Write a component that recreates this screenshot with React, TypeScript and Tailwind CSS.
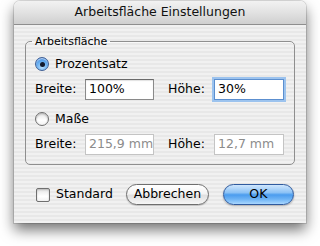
import React from "react";

const font = { fontFamily: '"DejaVu Sans", "Liberation Sans", sans-serif' };

function Radio({ checked }: { checked: boolean }) {
  return checked ? (
    <span className="flex h-[14px] w-[14px] shrink-0 items-center justify-center rounded-full border border-[#3f5f95] bg-[radial-gradient(circle_at_50%_75%,#b9e0ff_0%,#5ea8ee_55%,#2f6fcf_100%)] shadow-[inset_0_1px_1px_rgba(255,255,255,0.7)]">
      <span className="h-[5px] w-[5px] rounded-full bg-[#111a2e]" />
    </span>
  ) : (
    <span className="h-[14px] w-[14px] shrink-0 rounded-full border border-[#6f6f6f] bg-[linear-gradient(180deg,#e6e6e6_0%,#ffffff_60%,#f4f4f4_100%)] shadow-[inset_0_1px_2px_rgba(0,0,0,0.25)]" />
  );
}

function Field({
  value,
  width,
  focused,
  disabled,
}: {
  value: string;
  width: string;
  focused?: boolean;
  disabled?: boolean;
}) {
  return (
    <div
      className={
        "flex h-[21px] items-center overflow-hidden whitespace-nowrap bg-white pl-[3px] text-[12.5px] leading-none " +
        width +
        (focused
          ? " border border-[#5c8fcf] shadow-[0_0_0_2px_#9cc3ee]"
          : disabled
          ? " border border-[#c4c4c4] text-[#8c8c8c]"
          : " border border-[#8a8a8a] border-t-[#6a6a6a] shadow-[inset_0_1px_1px_rgba(0,0,0,0.12)] text-black")
      }
    >
      {value}
    </div>
  );
}

export default function App() {
  return (
    <div
      className="flex h-[246px] w-[320px] items-start bg-white pl-[14px] pt-[1px]"
      style={font}
    >
      <div className="flex h-[222px] w-[292px] flex-col overflow-hidden rounded-t-[6px] shadow-[0_7px_14px_rgba(0,0,0,0.55),0_0_0_1px_rgba(0,0,0,0.12)]">
        <div className="flex h-[24px] shrink-0 items-center justify-center border-b border-[#8e8e8e] bg-[linear-gradient(180deg,#f2f2f2_0%,#e2e2e2_50%,#cfcfcf_100%)] text-[12.5px] text-[#111]">
          Arbeitsfläche Einstellungen
        </div>
        <div className="flex flex-1 flex-col bg-[repeating-linear-gradient(180deg,#f1f1f1_0px,#f1f1f1_2px,#e8e8e8_2px,#e8e8e8_4px)] text-[12.5px] text-black">
          <fieldset className="mx-[11px] mt-[10px] h-[130px] rounded-[5px] border border-[#8f8f8f] shadow-[inset_0_1px_0_rgba(255,255,255,0.6)]">
            <legend className="ml-[6px] px-[3px] text-[11px] leading-[13px] text-black">
              Arbeitsfläche
            </legend>
            <div className="flex flex-col pl-[9px] pt-[9px]">
              <div className="flex h-[14px] items-center gap-[6px]">
                <Radio checked />
                <span>Prozentsatz</span>
              </div>
              <div className="mt-[8px] flex items-center">
                <span className="w-[50px]">Breite:</span>
                <Field value="100%" width="w-[69px]" />
                <span className="ml-[14px] w-[46px]">Höhe:</span>
                <Field value="30%" width="w-[70px]" focused />
              </div>
              <div className="mt-[12px] flex h-[14px] items-center gap-[6px]">
                <Radio checked={false} />
                <span>Maße</span>
              </div>
              <div className="mt-[8px] flex items-center">
                <span className="w-[50px]">Breite:</span>
                <Field value="215,9 mm" width="w-[69px]" disabled />
                <span className="ml-[14px] w-[46px]">Höhe:</span>
                <Field value="12,7 mm" width="w-[70px]" disabled />
              </div>
            </div>
          </fieldset>
          <div className="mt-[19px] flex items-center pl-[22px]">
            <span className="h-[14px] w-[14px] rounded-[2px] border border-[#6f6f6f] bg-[linear-gradient(180deg,#e4e4e4_0%,#ffffff_60%,#f2f2f2_100%)] shadow-[inset_0_1px_2px_rgba(0,0,0,0.2)]" />
            <span className="ml-[6px]">Standard</span>
            <button className="ml-[13px] flex h-[21px] w-[83px] items-center justify-center rounded-full border border-[#6e6e6e] bg-[linear-gradient(180deg,#ffffff_0%,#f4f4f4_45%,#e0e0e0_55%,#f6f6f6_100%)] text-[12.5px] text-black shadow-[0_1px_1px_rgba(0,0,0,0.2)]">
              Abbrechen
            </button>
            <button className="ml-[14px] flex h-[21px] w-[71px] items-center justify-center rounded-full border border-[#2f5a9e] bg-[linear-gradient(180deg,#cfe6fd_0%,#8cc2f5_40%,#4b9cee_52%,#6fb4f5_75%,#a9d7ff_100%)] text-[12.5px] text-black shadow-[0_1px_2px_rgba(0,0,0,0.3)]">
              OK
            </button>
          </div>
        </div>
      </div>
    </div>
  );
}
